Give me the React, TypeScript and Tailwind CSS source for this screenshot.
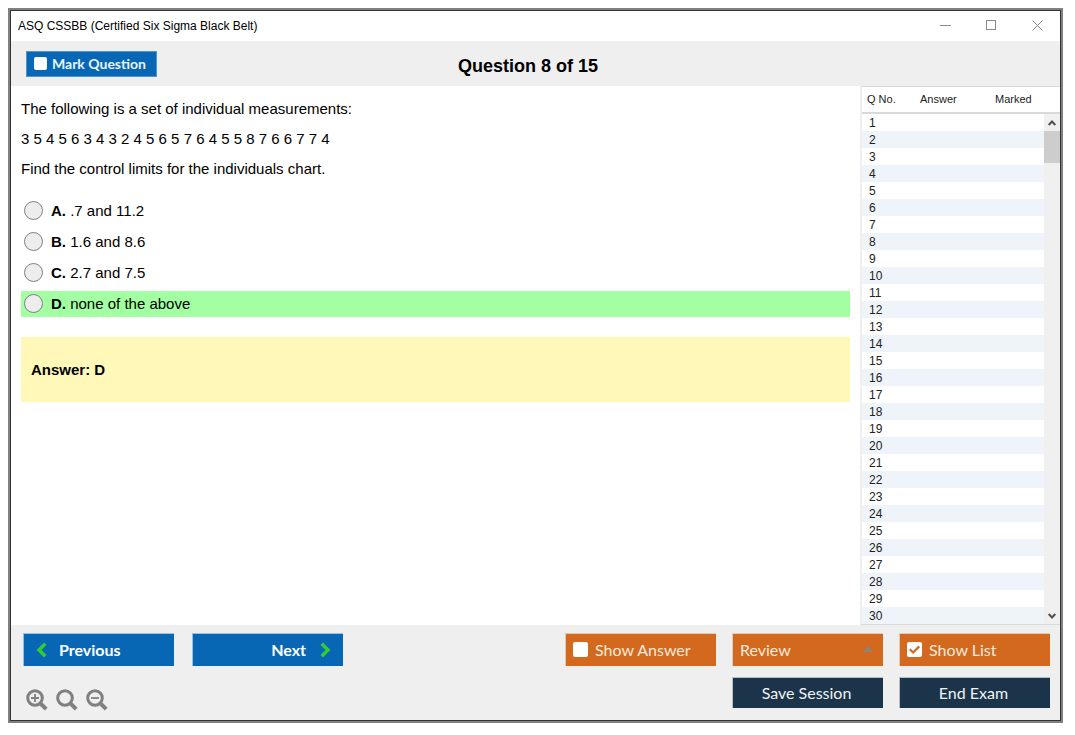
import { useState } from "react";
import type { ReactNode } from "react";

const measurements = "3 5 4 5 6 3 4 3 2 4 5 6 5 7 6 4 5 5 8 7 6 6 7 7 4";

const options = [
  { letter: "A", text: ".7 and 11.2" },
  { letter: "B", text: "1.6 and 8.6" },
  { letter: "C", text: "2.7 and 7.5" },
  { letter: "D", text: "none of the above" },
];

const correct = "D";

const rows = Array.from({ length: 30 }, (_, i) => i + 1);

const TitleBar = () => {
  return (
    <div className="flex h-[30px] items-center justify-between bg-white pl-[7px]">
      <div className="text-[12px] leading-4">ASQ CSSBB (Certified Six Sigma Black Belt)</div>
      <div className="flex pb-px text-[#8a8a8a]">
        <button aria-label="Minimize" className="flex h-7 w-[46px] items-center justify-center">
          <svg width="11" height="11" viewBox="0 0 11 11" stroke="currentColor">
            <path d="M0 5.5h11" />
          </svg>
        </button>
        <button aria-label="Maximize" className="flex h-7 w-[46px] items-center justify-center">
          <svg width="11" height="11" viewBox="0 0 11 11" fill="none" stroke="currentColor">
            <rect x="0.5" y="0.5" width="9" height="9" />
          </svg>
        </button>
        <button aria-label="Close" className="flex h-7 w-[46px] items-center justify-center">
          <svg width="11" height="11" viewBox="0 0 11 11" stroke="currentColor">
            <path d="M0.5 0.5l10 10M10.5 0.5l-10 10" />
          </svg>
        </button>
      </div>
    </div>
  );
};

const CheckBox = ({
  label,
  className,
  boxClass,
  defaultChecked = false,
}: {
  label: string;
  className: string;
  boxClass: string;
  defaultChecked?: boolean;
}) => {
  const [checked, setChecked] = useState(defaultChecked);

  return (
    <label className={className}>
      <span className="relative flex">
        <input
          type="checkbox"
          checked={checked}
          onChange={(e) => setChecked(e.target.checked)}
          className={boxClass}
        />
        {checked && (
          <svg
            className="pointer-events-none absolute inset-0 h-full w-full"
            viewBox="0 0 15 15"
            fill="none"
            stroke="#d2691e"
            strokeWidth="2.2"
          >
            <path d="M2.8 7.2l3.3 3.3 6.2-6.1" />
          </svg>
        )}
      </span>
      {label}
    </label>
  );
};

const QuestionList = () => {
  return (
    <div className="flex w-[200px] shrink-0 flex-col border-b border-l-2 border-b-[#d9d9d9] border-l-[#efefef] bg-white text-[#222]">
      <div className="flex min-h-0 flex-1">
        <div className="min-w-0 flex-1 overflow-hidden">
          <table className="w-full table-fixed border-separate border-spacing-0">
            <thead>
              <tr className="text-left text-[11px] leading-4">
                <th className="h-7 w-[53px] border-t border-b-2 border-[#d9d9d9] p-0 pb-px pl-[5px] font-normal">
                  Q No.
                </th>
                <th className="h-7 w-[75px] border-t border-b-2 border-[#d9d9d9] p-0 pb-px pl-[5px] font-normal">
                  Answer
                </th>
                <th className="h-7 border-t border-b-2 border-[#d9d9d9] p-0 pb-px pl-[5px] font-normal">
                  Marked
                </th>
              </tr>
            </thead>
            <tbody>
              {rows.map((n) => (
                <tr key={n} className="text-[12px] leading-4 even:bg-[#eef4f9]">
                  <td className="p-0 pt-px pl-[7px]">{n}</td>
                  <td className="p-0"></td>
                  <td className="p-0"></td>
                </tr>
              ))}
            </tbody>
          </table>
        </div>
        <div className="flex w-4 flex-col">
          <div className="h-7 border-t border-b-2 border-[#d9d9d9]"></div>
          <div className="flex flex-1 flex-col bg-[#f0f0f0] text-[#505050]">
            <button aria-label="Scroll up" className="flex h-[17px] items-center justify-center">
              <svg width="8" height="6" viewBox="0 0 8 6" fill="none" stroke="currentColor" strokeWidth="2">
                <path d="M0.7 5L4 1.5 7.3 5" />
              </svg>
            </button>
            <div className="h-8 bg-[#cdcdcd]"></div>
            <button aria-label="Scroll down" className="mt-auto flex h-[17px] items-center justify-center">
              <svg width="8" height="6" viewBox="0 0 8 6" fill="none" stroke="currentColor" strokeWidth="2">
                <path d="M0.7 1L4 4.5 7.3 1" />
              </svg>
            </button>
          </div>
        </div>
      </div>
    </div>
  );
};

const ZoomButton = ({ label, children }: { label: string; children?: ReactNode }) => {
  return (
    <button aria-label={label} className="text-[#808080]">
      <svg width="22" height="22" viewBox="0 0 22 22" fill="none" stroke="currentColor">
        <circle cx="9" cy="9" r="7.3" strokeWidth="3" />
        <path d="M14 14l6.2 6.2" strokeWidth="4" />
        {children}
      </svg>
    </button>
  );
};

const Footer = () => {
  return (
    <div className="flex shrink-0 justify-between bg-[#efefef] pt-2 pr-[10px] pb-[9px] pl-3 font-['Lato',sans-serif] text-[16px] leading-5">
      <div className="flex flex-col justify-between">
        <div className="flex gap-[18px] font-bold text-white">
          <button className="flex h-[33px] w-[151px] items-center gap-3 border-t border-l border-[#9dbfdb] bg-[#0767b5] pl-3">
            <svg width="11" height="16" viewBox="0 0 11 16" fill="none" stroke="#32cd32" strokeWidth="3.4">
              <path d="M9.3 1.8L3 8l6.3 6.2" />
            </svg>
            Previous
          </button>
          <button className="flex h-[33px] w-[151px] items-center justify-end gap-[14px] border-t border-l border-[#9dbfdb] bg-[#0767b5] pr-3">
            Next
            <svg width="11" height="16" viewBox="0 0 11 16" fill="none" stroke="#32cd32" strokeWidth="3.4">
              <path d="M1.7 1.8L8 8l-6.3 6.2" />
            </svg>
          </button>
        </div>
        <div className="flex gap-2 pl-[3px]">
          <ZoomButton label="Zoom in">
            <path d="M5 9h8M9 5v8" strokeWidth="1.8" />
          </ZoomButton>
          <ZoomButton label="Reset zoom" />
          <ZoomButton label="Zoom out">
            <path d="M5 9h8" strokeWidth="1.8" />
          </ZoomButton>
        </div>
      </div>
      <div className="grid grid-cols-[151px_151px_151px] gap-x-4 gap-y-[11px] pb-[3px] text-[#fbe9dc]">
        <CheckBox
          label="Show Answer"
          className="flex h-[33px] items-center gap-[7px] border-t border-l border-[#e6c8b0] bg-[#d2691e] pb-px pl-[7px]"
          boxClass="h-[15px] w-[15px] appearance-none rounded-xs bg-white"
        />
        <div className="relative">
          <select
            aria-label="Review"
            className="h-[33px] w-full appearance-none border-t border-l border-[#e6c8b0] bg-[#d2691e] pb-px pl-[7px]"
          >
            <option>Review</option>
          </select>
          <svg
            className="pointer-events-none absolute top-[13px] right-[10px]"
            width="10"
            height="6"
            viewBox="0 0 10 6"
            fill="#8f8377"
          >
            <path d="M0 6L5 0l5 6z" />
          </svg>
        </div>
        <CheckBox
          label="Show List"
          defaultChecked
          className="flex h-[33px] items-center gap-[7px] border-t border-l border-[#e6c8b0] bg-[#d2691e] pb-px pl-[7px]"
          boxClass="h-[15px] w-[15px] appearance-none rounded-xs bg-white"
        />
        <button className="col-start-2 h-[31px] border-t border-l border-[#b4bec4] bg-[#1b344a] pr-[3px] text-[#eef2f5]">
          Save Session
        </button>
        <button className="h-[31px] border-t border-l border-[#b4bec4] bg-[#1b344a] pr-[3px] text-[#eef2f5]">
          End Exam
        </button>
      </div>
    </div>
  );
};

const App = () => {
  const [answer, setAnswer] = useState("");

  return (
    <div className="h-screen bg-white pt-2 pr-3 pb-3 pl-2 font-['Liberation_Sans',sans-serif] text-black">
      <div className="h-full border-2 border-[#808080]">
        <div className="flex h-full flex-col border border-[#333]">
          <TitleBar />
          <div className="grid h-[45px] shrink-0 grid-cols-[1fr_auto_1fr] items-center bg-[#efefef] pr-[30px] pl-[15px]">
            <CheckBox
              label="Mark Question"
              className="flex h-[26px] w-[131px] items-center gap-[5px] border border-[#4f94cc] bg-[#0767b5] pl-[7px] font-['Lato',sans-serif] text-[14px] leading-5 font-bold text-[#eaf3fb]"
              boxClass="h-[13px] w-[13px] appearance-none rounded-xs bg-white"
            />
            <h1 className="pt-1 text-[18px] leading-6 font-bold">Question 8 of 15</h1>
          </div>
          <div className="flex min-h-0 flex-1 bg-white">
            <div className="min-w-0 flex-1 overflow-hidden px-[10px] pt-3 text-[15px] leading-[21px]">
              <div className="flex flex-col gap-[9px]">
                <p>The following is a set of individual measurements:</p>
                <p>{measurements}</p>
                <p>Find the control limits for the individuals chart.</p>
              </div>
              <div className="mt-[19px] flex flex-col gap-[5px]">
                {options.map((o) => (
                  <label
                    key={o.letter}
                    className={
                      o.letter === correct
                        ? "flex h-[26px] items-center bg-[#a2ffa2] pb-px pl-[3px]"
                        : "flex h-[26px] items-center pb-px pl-[3px]"
                    }
                  >
                    <input
                      type="radio"
                      name="answer"
                      checked={answer === o.letter}
                      onChange={() => setAnswer(o.letter)}
                      className="mr-2 h-[19px] w-[19px] appearance-none rounded-full border border-[#808080] bg-[#ededed] checked:border-[6px]"
                    />
                    <span>
                      <b>{o.letter}.</b> {o.text}
                    </span>
                  </label>
                ))}
              </div>
              <div className="mt-5 bg-[#fff8b9] px-[10px] py-[22px] font-bold">Answer: {correct}</div>
            </div>
            <QuestionList />
          </div>
          <Footer />
        </div>
      </div>
    </div>
  );
};

export default App;
